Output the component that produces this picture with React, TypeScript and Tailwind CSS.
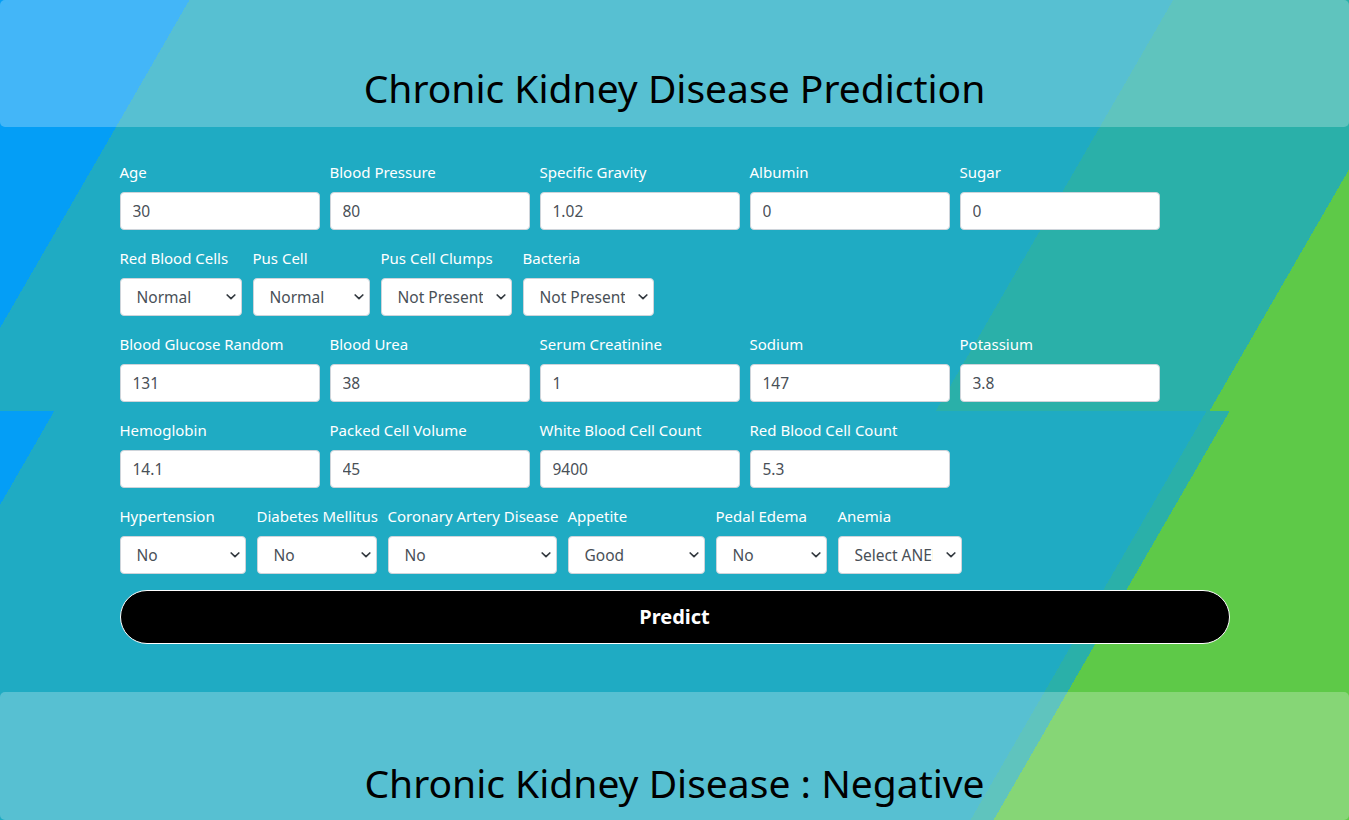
import React from "react";

const Chevron = () => (
  <svg
    className="pointer-events-none absolute right-[6px] top-1/2 -translate-y-1/2"
    width="10"
    height="7"
    viewBox="0 0 10 7"
    fill="none"
  >
    <path d="M1.2 1.5 L5 5.2 L8.8 1.5" stroke="#343a40" strokeWidth="1.7" strokeLinecap="round" strokeLinejoin="round" />
  </svg>
);

function TextField({ label, value }: { label: string; value: string }) {
  return (
    <div className="flex w-[200px] flex-col">
      <label className="mb-[8px] h-[24px] whitespace-nowrap text-[15px] leading-[24px] text-white">{label}</label>
      <input
        defaultValue={value}
        className="h-[38px] w-full rounded-[4px] border border-[#ced4da] bg-white px-[12px] text-[15.5px] text-[#495057] outline-none"
      />
    </div>
  );
}

function SelectField({ label, value, options, w }: { label: string; value: string; options: string[]; w: number }) {
  return (
    <div className="flex flex-col" style={{ width: w }}>
      <label className="mb-[8px] h-[24px] whitespace-nowrap text-[15px] leading-[24px] text-white">{label}</label>
      <div className="relative">
        <select
          defaultValue={value}
          className="h-[38px] w-full appearance-none rounded-[4px] border border-[#ced4da] bg-white pb-[1px] pl-[16px] pr-[28px] pt-[3px] text-[15.5px] text-[#495057] outline-none"
        >
          {options.map((o) => (
            <option key={o}>{o}</option>
          ))}
        </select>
        <Chevron />
      </div>
    </div>
  );
}

export default function App() {
  return (
    <div className="relative min-h-[820px] w-full overflow-hidden font-['Noto_Sans',sans-serif]">
      {/* background tiles */}
      <div className="absolute inset-0 flex flex-col">
        <div className="h-[411px] w-full bg-[linear-gradient(120deg,#049ef6_164px,#1fabc3_164px,#1fabc3_1016px,#2ab0a9_1016px,#2ab0a9_1253px,#5ec948_1253px)]" />
        <div className="w-full flex-1 bg-[linear-gradient(120deg,#049ef6_47px,#1fabc3_47px,#1fabc3_1045px,#2ab0a9_1045px,#2ab0a9_1065px,#5ec948_1065px)]" />
      </div>

      <div className="relative flex flex-col">
        <header className="flex h-[127px] items-start justify-center rounded-[5px] bg-white/25 pt-[64px]">
          <h1 className="text-[39px] leading-[48px] font-normal text-black">Chronic Kidney Disease Prediction</h1>
        </header>

        <form className="mx-auto mt-[33px] flex w-[1110px] flex-col gap-[16px]">
          <div className="flex gap-[10px]">
            <TextField label="Age" value="30" />
            <TextField label="Blood Pressure" value="80" />
            <TextField label="Specific Gravity" value="1.02" />
            <TextField label="Albumin" value="0" />
            <TextField label="Sugar" value="0" />
          </div>
          <div className="flex gap-[11px]">
            <SelectField label="Red Blood Cells" value="Normal" options={["Normal", "Abnormal"]} w={122} />
            <SelectField label="Pus Cell" value="Normal" options={["Normal", "Abnormal"]} w={117} />
            <SelectField label="Pus Cell Clumps" value="Not Present" options={["Not Present", "Present"]} w={131} />
            <SelectField label="Bacteria" value="Not Present" options={["Not Present", "Present"]} w={131} />
          </div>
          <div className="flex gap-[10px]">
            <TextField label="Blood Glucose Random" value="131" />
            <TextField label="Blood Urea" value="38" />
            <TextField label="Serum Creatinine" value="1" />
            <TextField label="Sodium" value="147" />
            <TextField label="Potassium" value="3.8" />
          </div>
          <div className="flex gap-[10px]">
            <TextField label="Hemoglobin" value="14.1" />
            <TextField label="Packed Cell Volume" value="45" />
            <TextField label="White Blood Cell Count" value="9400" />
            <TextField label="Red Blood Cell Count" value="5.3" />
          </div>
          <div className="flex gap-[11px]">
            <SelectField label="Hypertension" value="No" options={["No", "Yes"]} w={126} />
            <SelectField label="Diabetes Mellitus" value="No" options={["No", "Yes"]} w={120} />
            <SelectField label="Coronary Artery Disease" value="No" options={["No", "Yes"]} w={169} />
            <SelectField label="Appetite" value="Good" options={["Good", "Poor"]} w={137} />
            <SelectField label="Pedal Edema" value="No" options={["No", "Yes"]} w={111} />
            <SelectField label="Anemia" value="Select ANEMIA" options={["Select ANEMIA", "No", "Yes"]} w={124} />
          </div>
          <button
            type="button"
            className="h-[54px] w-full rounded-full border border-white bg-black text-[20px] font-bold text-white"
          >
            Predict
          </button>
        </form>

        <footer className="mt-[48px] flex h-[128px] items-start justify-center rounded-[5px] bg-white/25 pt-[67px]">
          <h2 className="text-[39px] leading-[48px] font-normal text-black">Chronic Kidney Disease : Negative</h2>
        </footer>
      </div>
    </div>
  );
}
